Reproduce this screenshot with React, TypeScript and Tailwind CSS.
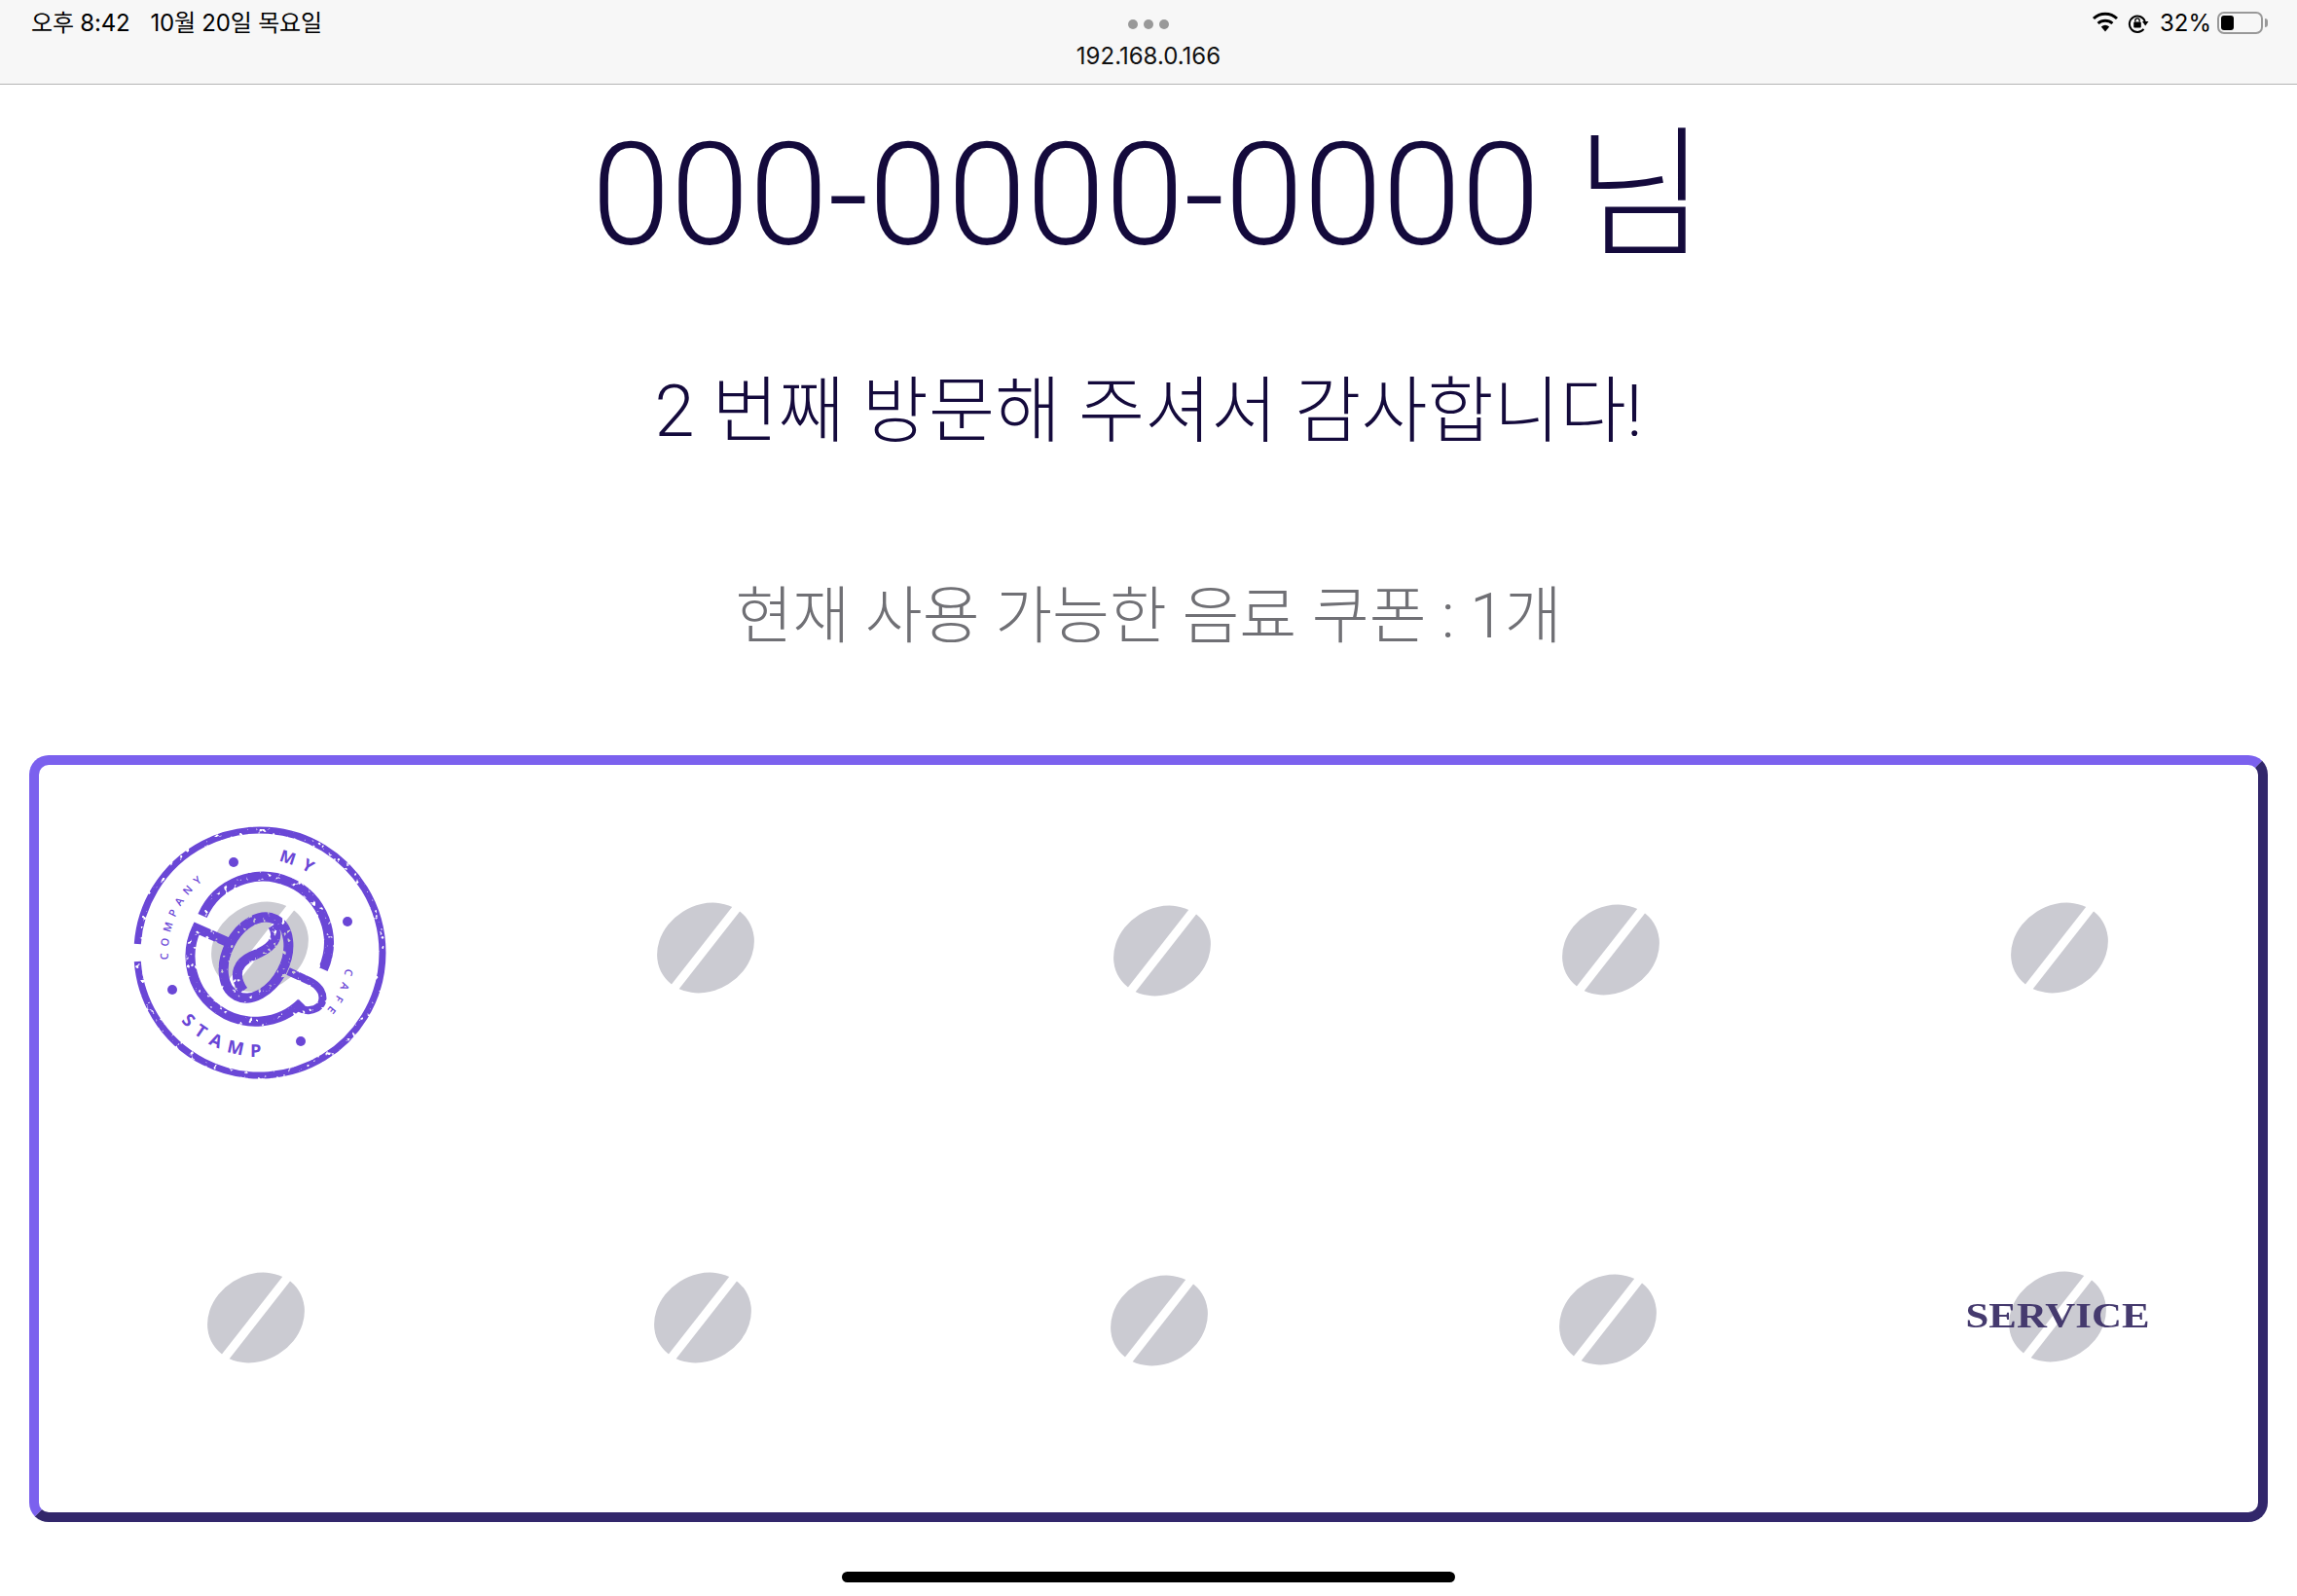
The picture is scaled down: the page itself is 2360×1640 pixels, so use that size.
const rows = [
  [
    { cell: 'ml-[175px] mt-0', first: true },
    { cell: 'ml-[354px] mt-[1px]' },
    { cell: 'ml-[365px] mt-[4px]' },
    { cell: 'ml-[357px] mt-[3px]' },
    { cell: 'ml-[357px] mt-[1px]' },
  ],
  [
    { cell: 'ml-[171px] mt-[1px]' },
    { cell: 'ml-[355px] mt-[1px]' },
    { cell: 'ml-[365px] mt-[4px]' },
    { cell: 'ml-[357px] mt-[3px]' },
    { cell: 'ml-[358px] mt-0', service: true },
  ],
]

function Bean() {
  return (
    <svg width="104" height="96" viewBox="0 0 104 96" className="block">
      <ellipse cx="52" cy="48" rx="52" ry="44" transform="rotate(-32 52 48)" fill="#cbcbd2" />
      <line x1="88" y1="2" x2="16" y2="94" stroke="#ffffff" strokeWidth="9" />
    </svg>
  )
}

function Stamp() {
  return (
    <svg width="290" height="290" viewBox="0 0 290 290" className="absolute left-[-95px] top-[-94px]">
      <defs>
        <filter id="rough" filterUnits="userSpaceOnUse" x="0" y="0" width="290" height="290">
          <feTurbulence type="fractalNoise" baseFrequency="0.2" numOctaves="2" seed="4" result="noise" />
          <feColorMatrix
            in="noise"
            type="matrix"
            values="0 0 0 0 0  0 0 0 0 0  0 0 0 0 0  0 0 0 -9 3.2"
            result="holes"
          />
          <feComposite in="SourceGraphic" in2="holes" operator="out" />
        </filter>
        <path id="arc-company" d="M53 155 A94 94 0 0 1 147 54" />
        <path id="arc-my" d="M166 54 A96 96 0 0 1 240 122" />
        <path id="arc-cafe" d="M235 164 A92 92 0 0 1 190 229" />
        <path id="arc-stamp" d="M66 218 A107 107 0 0 0 200 241" />
      </defs>
      <g filter="url(#rough)" fill="none" stroke="#6a46d6">
        <path d="M21.3 139 A126 126 0 1 1 21.3 157" strokeWidth="7" />
        <path d="M88 110 A67 67 0 0 1 212 165" strokeWidth="10" />
        <path d="M190 199 A67 67 0 0 1 82 123 L116 138" strokeWidth="10" />
        <path d="M176 167 L198 177 C216 186 216 205 198 207 C192 208 188 205 184 203" strokeWidth="8" />
        <ellipse cx="143" cy="153" rx="44" ry="30" transform="rotate(-63 143 153)" strokeWidth="10" />
        <path d="M160 120 C170 135 155 145 140 151 C125 157 118 170 130 187" strokeWidth="10" />
      </g>
      <g fill="#6a46d6">
        <circle cx="120" cy="55" r="5" />
        <circle cx="237" cy="116" r="5" />
        <circle cx="189" cy="239" r="5" />
        <circle cx="57" cy="186" r="5" />
      </g>
      <g fill="#6a46d6" className="font-['Open_Sans',sans-serif]">
        <text fontSize="11" letterSpacing="6" fontWeight="600">
          <textPath href="#arc-company">COMPANY</textPath>
        </text>
        <text fontSize="17" letterSpacing="8" fontWeight="700">
          <textPath href="#arc-my">MY</textPath>
        </text>
        <text fontSize="11" letterSpacing="7" fontWeight="600">
          <textPath href="#arc-cafe">CAFE</textPath>
        </text>
        <text fontSize="18" letterSpacing="8" fontWeight="700">
          <textPath href="#arc-stamp">STAMP</textPath>
        </text>
      </g>
    </svg>
  )
}

function Wifi() {
  return (
    <svg width="28" height="21" viewBox="0 0 28 21">
      <path d="M14 20.5 L9.8 15.6 A6.5 6.5 0 0 1 18.2 15.6 Z" fill="#000" />
      <path d="M6.6 12 A11 11 0 0 1 21.4 12" fill="none" stroke="#000" strokeWidth="3" />
      <path d="M2 7 A17.5 17.5 0 0 1 26 7" fill="none" stroke="#000" strokeWidth="3" />
    </svg>
  )
}

function RotationLock() {
  return (
    <svg width="22" height="20" viewBox="0 0 22 20">
      <path d="M17.8 8 A8.2 8.2 0 1 0 16.5 15.8" fill="none" stroke="#000" strokeWidth="2" />
      <path d="M15 8 L21.5 8 L18.2 12.5 Z" fill="#000" />
      <rect x="6.2" y="8.6" width="7.6" height="6" rx="1" fill="#000" />
      <path d="M7.8 8.6 V7 A2.2 2.2 0 0 1 12.2 7 V8.6" fill="none" stroke="#000" strokeWidth="1.3" />
    </svg>
  )
}

export default function App() {
  return (
    <div className="flex h-[1640px] w-[2360px] flex-col overflow-hidden bg-white font-['Roboto','Noto_Sans_CJK_KR',sans-serif]">
      {/* ipad status bar */}
      <header className="grid h-[87px] grid-cols-3 border-b border-[#b4b4b4] bg-[#f7f7f7] font-['Inter','Noto_Sans_CJK_KR',sans-serif] text-[24px] text-black">
        <div className="flex gap-[21px] pl-[32px] pt-[6px] leading-[36px] tracking-[-0.2px]">
          <span>오후 8:42</span>
          <span>10월 20일 목요일</span>
        </div>
        <div className="flex flex-col items-center pt-[20px]">
          <div className="flex gap-[6px]">
            <span className="h-[10px] w-[10px] rounded-full bg-[#999999]" />
            <span className="h-[10px] w-[10px] rounded-full bg-[#999999]" />
            <span className="h-[10px] w-[10px] rounded-full bg-[#999999]" />
          </div>
          <div className="mt-[11px] leading-[34px] text-[#111111]">192.168.0.166</div>
        </div>
        <div className="flex items-start justify-end pr-[30px] pt-[12px]">
          <Wifi />
          <div className="ml-[9px] mt-[2px]">
            <RotationLock />
          </div>
          <div className="ml-[11px] mt-[-5px] leading-[34px]">32%</div>
          <div className="ml-[6px] h-[23px] w-[47px] rounded-[7px] border-2 border-[#999999] p-[2px]">
            <div className="h-full w-[13px] rounded-[3px] bg-black" />
          </div>
          <div className="ml-[2px] mt-[7px] h-[9px] w-[3px] rounded-r-full bg-[#999999]" />
        </div>
      </header>

      <h1 className="mt-[20px] text-center text-[146px] leading-[190px] font-light text-[#140a3c]">000-0000-0000 님</h1>
      <p className="mt-[76px] text-center text-[74px] leading-[100px] font-light text-[#140a3c]">2 번째 방문해 주셔서 감사합니다!</p>
      <p className="mt-[111px] text-center text-[64px] leading-[100px] font-light text-[#707075]">현재 사용 가능한 음료 쿠폰 : 1개</p>

      {/* stamp card */}
      <div className="mx-[30px] mt-[92px] h-[788px] rounded-[20px] border-[10px] border-t-[#7b61ee] border-r-[#32276b] border-b-[#32276b] border-l-[#7b61ee]">
        {rows.map((row, i) => (
          <div key={i} className="flex h-[380px] items-start pt-[139px]">
            {row.map((b, j) => (
              <div key={j} className={`relative shrink-0 ${b.cell}`}>
                <Bean />
                {b.first && <Stamp />}
                {b.service && (
                  <span className="absolute top-[29px] left-[-41px] w-[186px] scale-x-[1.19] text-center font-['Liberation_Serif',serif] text-[36px] leading-[36px] font-bold text-[#453a6e]">
                    SERVICE
                  </span>
                )}
              </div>
            ))}
          </div>
        ))}
      </div>

      <div className="mx-auto mt-[51px] h-[11px] w-[630px] rounded-full bg-black" />
    </div>
  )
}
